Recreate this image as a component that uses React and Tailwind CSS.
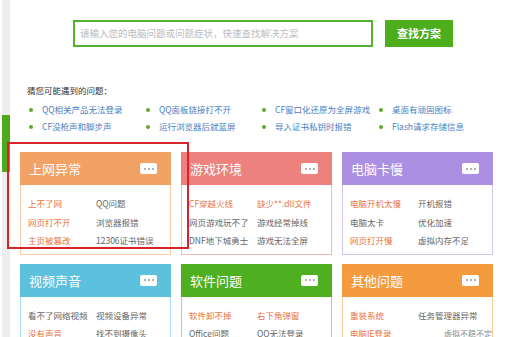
import React from 'react';

const questions = [
	'QQ相关产品无法登录',
	'QQ面板链接打不开',
	'CF窗口化还原为全屏游戏',
	'桌面有顽固图标',
	'CF没枪声和脚步声',
	'运行浏览器后就蓝屏',
	'导入证书私钥时报错',
	'Flash请求存储信息',
];

const cards = [
	{
		title: '上网异常',
		head: 'bg-[#f3a265]',
		border: 'border-[#f6caa9]',
		items: [
			['上不了网', true], ['QQ问题', false],
			['网页打不开', true], ['浏览器报错', false],
			['主页被篡改', true], ['12306证书错误', false],
		],
	},
	{
		title: '游戏环境',
		head: 'bg-[#ec817d]',
		border: 'border-[#f2b8b5]',
		items: [
			['CF穿越火线', true], ['缺少**.dll文件', true],
			['网页游戏玩不了', false], ['游戏经常掉线', false],
			['DNF地下城勇士', false], ['游戏无法全屏', false],
		],
	},
	{
		title: '电脑卡慢',
		head: 'bg-[#aa8fe3]',
		border: 'border-[#d2c6ef]',
		items: [
			['电脑开机太慢', true], ['开机报错', false],
			['电脑太卡', false], ['优化加速', false],
			['网页打开慢', true], ['虚拟内存不足', false],
		],
	},
	{
		title: '视频声音',
		head: 'bg-[#5cc1dc]',
		border: 'border-[#a8dbeb]',
		items: [
			['看不了网络视频', false], ['视频设备异常', false],
			['没有声音', true], ['找不到摄像头', false],
			['声音有杂音', false], ['麦克风没声音', false],
		],
	},
	{
		title: '软件问题',
		head: 'bg-[#4eaf20]',
		border: 'border-[#a6d88f]',
		items: [
			['软件卸不掉', true], ['右下角弹窗', true],
			['Office问题', false], ['QQ无法登录', false],
			['软件打不开', false], ['软件乱码', false],
		],
	},
	{
		title: '其他问题',
		head: 'bg-[#f59b3f]',
		border: 'border-[#f8cb96]',
		items: [
			['重装系统', true], ['任务管理器异常', false],
			['电脑IE登录', true], ['', false],
			['', false], ['', false],
		],
	},
];

function Card({ card }) {
	return (
		<div className="w-[151px]">
			<div className={`${card.head} h-[33px] flex items-center justify-between pl-[9px] pr-[14px]`}>
				<span className="text-white text-[13px] leading-none">{card.title}</span>
				<span className="w-[17px] h-[11px] bg-white rounded-[2px] flex items-center justify-center gap-[2px]">
					<i className="block w-[2px] h-[2px] rounded-full bg-[#999]" />
					<i className="block w-[2px] h-[2px] rounded-full bg-[#999]" />
					<i className="block w-[2px] h-[2px] rounded-full bg-[#999]" />
				</span>
			</div>
			<div className={`border ${card.border} border-t-0 bg-white pt-[9px] pb-[4px] pl-[7px] grid grid-cols-[68px_1fr]`}>
				{card.items.map(([label, hot], i) => (
					<span
						key={i}
						className={`text-[8.5px] leading-[18.5px] whitespace-nowrap ${hot ? 'text-[#ea7444]' : 'text-[#666]'}`}
					>
						{label || '\u00a0'}
					</span>
				))}
			</div>
		</div>
	);
}

export default function App() {
	return (
		<div
			className="relative w-[514px] h-[337px] overflow-hidden bg-white flex"
			style={{ fontFamily: '"Noto Sans CJK SC", "Noto Sans", sans-serif' }}
		>
			{/* left scroll rail */}
			<div className="ml-[2px] w-[8px] h-full bg-[#ededed] pt-[115px]">
				<div className="h-[57px] bg-[#4cab1b]" />
			</div>

			<div className="flex-1">
				{/* search */}
				<div className="pt-[20px] pl-[63px] flex gap-[12px]">
					<div className="w-[300px] h-[27px] border-2 border-[#55b230] flex items-center pl-[5px]">
						<span className="text-[9.5px] text-[#bbb] whitespace-nowrap">请输入您的电脑问题或问题症状，快速查找解决方案</span>
					</div>
					<button className="w-[68px] h-[27px] bg-[#4dae1d] text-white text-[11px] font-bold">
						查找方案
					</button>
				</div>

				{/* guesses */}
				<div className="mt-[37px] pl-[17px] text-[8.5px] leading-[12px] text-[#333]">猜您可能遇到的问题：</div>
				<div className="mt-[5px] pl-[19px] grid grid-cols-[117px_116px_117px_117px]">
					{questions.map((q) => (
						<div key={q} className="flex items-center h-[17px]">
							<span className="w-[4px] h-[4px] rounded-full bg-[#5aab2a] mr-[9px]" />
							<span className="text-[8.5px] text-[#4a80c2] whitespace-nowrap">{q}</span>
						</div>
					))}
				</div>

				{/* categories */}
				<div className="mt-[17px] pl-[10px] grid grid-cols-[151px_151px_151px] gap-x-[10px] gap-y-[9px]">
					{cards.map((c) => (
						<Card key={c.title} card={c} />
					))}
				</div>
			</div>

			{/* highlight frame */}
			<div className="absolute left-[7px] top-[142px] w-[182px] h-[107px] border-2 border-[#d9232a]" />

			<span className="absolute left-[444px] top-[328px] text-[8px] text-[#888] whitespace-nowrap">虚拟不稳不定</span>
		</div>
	);
}
